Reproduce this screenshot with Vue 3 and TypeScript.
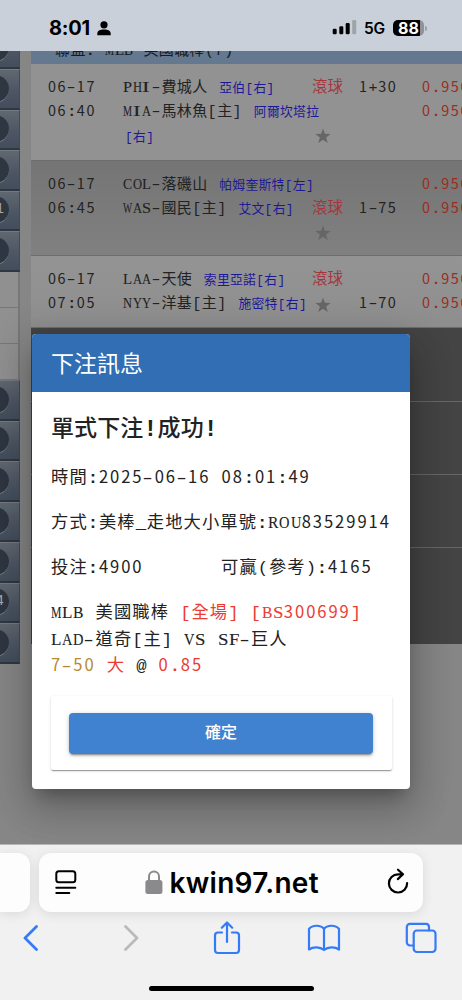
<script setup lang="ts">
import { h, type FunctionalComponent } from 'vue'

interface TeamLine { name?: string; pitcher: string }
interface Game {
  date: string
  time: string
  teams: TeamLine[]
  status: string[]
  handicap: string[]
}

const games: Game[] = [
  {
    date: '06-17', time: '06:40',
    teams: [
      { name: 'PHI-費城人 ', pitcher: '亞伯[右]' },
      { name: 'MIA-馬林魚[主] ', pitcher: '阿爾坎塔拉' },
      { pitcher: '[右]' },
    ],
    status: ['滾球', '', '★'], handicap: ['1+30'],
  },
  {
    date: '06-17', time: '06:45',
    teams: [
      { name: 'COL-落磯山 ', pitcher: '帕姆奎斯特[左]' },
      { name: 'WAS-國民[主] ', pitcher: '艾文[右]' },
    ],
    status: ['', '滾球', '★'], handicap: ['', '1-75'],
  },
  {
    date: '06-17', time: '07:05',
    teams: [
      { name: 'LAA-天使 ', pitcher: '索里亞諾[右]' },
      { name: 'NYY-洋基[主] ', pitcher: '施密特[右]' },
    ],
    status: ['滾球', '★'], handicap: ['', '1-70'],
  },
]

const menuTop = ['', '', '', '', '1', '']
const menuBottom = ['', '', '', '', '', '4', '']

// Advance widths of the serif capitals, in em, used to fit each one to a fixed cell.
const widths: Record<string, number> = {
  A: 0.722, B: 0.667, C: 0.667, D: 0.722, F: 0.556, H: 0.722, I: 0.4, L: 0.611, M: 0.889,
  N: 0.722, O: 0.722, P: 0.556, R: 0.667, S: 0.556, U: 0.722, V: 0.722, W: 0.944, Y: 0.722,
}

// Sets a line of mixed text on a typewriter grid: Latin in half cells, Han in full ones.
const Mono: FunctionalComponent<{ text: string }> = (props) => {
  const runs = props.text.match(/[0-9]+|[A-Z]|-|[:!.]|[^0-9.:!A-Z\u4e00-\u9fff-]+|[\u4e00-\u9fff]+/g) ?? []
  return h('span', { class: 'mono' }, runs.map((run) => {
    if (/[A-Z]/.test(run)) {
      const scale = 0.61 / (widths[run] ?? 0.7)
      return h('span', { class: 'm-cap' }, [
        h('span', { class: 'm-glyph', style: { transform: `scaleX(${scale.toFixed(3)})` } }, run),
      ])
    }
    if (run === '-') return h('span', { class: 'm-dash' }, run)
    if (/[:!.]/.test(run)) return h('span', { class: 'm-sym m-dot' }, run)
    const kind = /[0-9]/.test(run) ? 'm-num' : /[\u4e00-\u9fff]/.test(run) ? 'm-han' : 'm-sym'
    return h('span', { class: kind }, run)
  }))
}
Mono.props = ['text']
</script>

<template>
  <div class="phone">
    <header class="status">
      <span class="clock">8:01</span>
      <svg class="person" width="14" height="15" viewBox="0 0 14 15"><circle cx="7" cy="3.8" r="3.6" /><path d="M.3 14.2V12.6C.3 9.9 3 8.5 7 8.5s6.700 1.400 6.700 4.100v1.600z" /></svg>
      <svg class="signal" width="25" height="15" viewBox="0 0 25 15">
        <rect x=".7" y="8.700" width="4" height="5.600" rx="1.200" /><rect x="7.300" y="6.200" width="4" height="8.100" rx="1.200" />
        <rect x="13.700" y="3" width="4" height="11.300" rx="1.200" /><rect x="20.200" y="0" width="4" height="14.300" rx="1.200" fill="#9fa4ac" />
      </svg>
      <span class="net">5G</span>
      <span class="battery">88</span>
      <span class="cap"></span>
    </header>

    <main class="page">
      <aside class="side">
        <div class="menu first">
          <div v-for="(n, i) in menuTop" :key="i" class="item"><span class="dot">{{ n }}</span></div>
        </div>
        <div class="blank"><i></i><i></i><i></i></div>
        <div class="menu">
          <div v-for="(n, i) in menuBottom" :key="i" class="item"><span class="dot">{{ n }}</span></div>
        </div>
      </aside>

      <section class="board">
        <div class="league"><Mono text="聯盟: MLB 美國職棒(7)" /></div>
        <div v-for="(g, i) in games" :key="i" class="game" :class="'g' + i">
          <div class="col">
            <div class="ln"><Mono :text="g.date" /></div>
            <div class="ln"><Mono :text="g.time" /></div>
          </div>
          <div class="teams">
            <div v-for="(t, k) in g.teams" :key="k" class="team">
              <Mono v-if="t.name" :text="t.name" /><Mono class="pitcher" :text="t.pitcher" />
            </div>
          </div>
          <div class="col live">
            <template v-for="(s, k) in g.status" :key="k">
              <div v-if="s === '★'" class="star">
                <svg width="16" height="16" viewBox="0 0 16 16"><path d="M8 .5l1.900 5.300 5.700.2-4.500 3.500 1.600 5.500L8 11.800 3.300 15l1.600-5.500L.4 6l5.700-.2z" /></svg>
              </div>
              <div v-else class="ln">{{ s }}</div>
            </template>
          </div>
          <div class="col">
            <div v-for="(s, k) in g.handicap" :key="k" class="ln"><Mono :text="s" /></div>
          </div>
          <div class="col odds">
            <div class="ln"><Mono text="0.950" /></div>
            <div class="ln"><Mono text="0.950" /></div>
          </div>
        </div>
        <div class="dark"><i></i><i></i><i></i></div>
      </section>

      <div class="dialog">
        <div class="head">下注訊息</div>
        <div class="body">
          <h2><Mono text="單式下注!成功!" /></h2>
          <p><Mono text="時間:2025-06-16 08:01:49" /></p>
          <p><Mono text="方式:美棒_走地大小單號:ROU83529914" /></p>
          <p class="pair"><span><Mono text="投注:4900" /></span><span><Mono text="可贏(參考):4165" /></span></p>
          <div class="bet">
            <div><Mono text="MLB 美國職棒 " /><Mono class="red" text="[全場] [BS300699]" /></div>
            <div><Mono text="LAD-道奇[主] VS SF-巨人" /></div>
            <div><Mono class="gold" text="7-50 " /><Mono class="red" text="大 " /><Mono text="@ " /><Mono class="red" text="0.85" /></div>
          </div>
          <div class="actions"><button>確定</button></div>
        </div>
      </div>
    </main>

    <footer class="safari">
      <div class="tabs">
        <div class="prev"></div>
        <div class="address">
          <svg class="reader" width="22" height="25" viewBox="0 0 22 25" fill="none" stroke="#000" stroke-width="2" stroke-linecap="round"><rect x="1.300" y="1.200" width="19" height="11" rx="2.500" /><path d="M1.300 17.700h19M1.300 23h13" /></svg>
          <div class="host">
            <svg width="18" height="25" viewBox="0 0 18 25"><path d="M4 11V6.600a5 5 0 0 1 10 0V11" fill="none" stroke="#8a8a8d" stroke-width="2" /><rect x=".4" y="10" width="17" height="14" rx="2.500" fill="#8a8a8d" /></svg>
            <span>kwin97.net</span>
          </div>
          <svg class="reload" width="22" height="26" viewBox="0 0 22 26" fill="none" stroke="#000" stroke-width="2.200" stroke-linecap="round" stroke-linejoin="round"><path d="M16 6.300H11A9.100 9.100 0 1 0 20.100 15.200M11 1.700l5 4.600-5.200 4.800" /></svg>
        </div>
      </div>
      <nav class="tools">
        <svg width="16" height="26" viewBox="0 0 16 26"><path d="M13.500 1.500L2 13l11.500 11.500" /></svg>
        <svg class="off" width="16" height="26" viewBox="0 0 16 26"><path d="M2.500 1.500L14 13 2.500 24.500" /></svg>
        <svg class="thin share" width="28" height="34" viewBox="0 0 28 34"><path d="M9 11.500H5a3 3 0 0 0-3 3V29a3 3 0 0 0 3 3h18a3 3 0 0 0 3-3V14.500a3 3 0 0 0-3-3h-4M14 21V1.800M8.800 6.700L14 1.500l5.200 5.200" /></svg>
        <svg class="thin book" width="34" height="28" viewBox="0 0 34 28"><path d="M17 5C14 .8 5.500.5 2 5v20.500c4-3 11-3 15 .5 4-3.500 11-3.500 15-.5V5C28.500.5 20 .8 17 5zV26" /></svg>
        <svg class="thin" width="32" height="32" viewBox="0 0 32 32"><path d="M8.500 23.500H5a3.200 3.200 0 0 1-3.200-3.200V5A3.200 3.200 0 0 1 5 1.800h16A3.200 3.200 0 0 1 24 5v3.500" /><rect x="8.700" y="8.500" width="21.800" height="21.500" rx="3.200" /></svg>
      </nav>
      <div class="home"></div>
    </footer>
  </div>
</template>

<style>
body { margin: 0; }
.mono { white-space: pre; }
.mono .m-num { font-family: "Noto Sans CJK TC", sans-serif; font-size: .96em; letter-spacing: calc(var(--half) - .555em); }
.mono .m-han { letter-spacing: calc(var(--full) - 1em); }
.mono .m-sym { font-family: "Liberation Mono", monospace; letter-spacing: calc(var(--half) - .6em); }
.mono .m-dot { font-weight: 700; }
.mono .m-dash { display: inline-block; width: var(--half); line-height: 1; font-family: "Liberation Mono", monospace; transform: scaleX(1.55); text-indent: -.02em; }
.mono .m-cap { display: inline-block; width: var(--half); line-height: 1; }
.mono .m-glyph { display: inline-block; font-family: "Liberation Serif", serif; font-size: .99em; line-height: 1; transform-origin: 0 50%; -webkit-text-stroke: .1px currentColor; }
</style>

<style scoped>
.phone { width: 462px; height: 1000px; display: flex; flex-direction: column; overflow: hidden; background: #868686; font-family: "Noto Sans CJK TC", sans-serif; color: #222; }
.status { height: 51px; flex: none; display: flex; align-items: center; box-sizing: border-box; padding: 5px 36px 0 49px; background: #c9d0d9; font-family: Inter, sans-serif; color: #000; }
.clock { width: 42px; font-size: 20px; font-weight: 700; letter-spacing: -.2px; }
.person { margin-left: 6px; }
.signal { margin-left: auto; margin-top: -1px; }
.net { margin-left: 7px; width: 22px; font-size: 15.500px; font-weight: 600; letter-spacing: -.2px; }
.battery { margin-left: 7px; margin-top: -1px; width: 31px; height: 16px; line-height: 16px; border-radius: 5px; background: linear-gradient(90deg, #000 88%, #8e939b 88%); color: #fff; font-size: 16px; font-weight: 700; text-align: center; }
.cap { width: 2px; height: 5px; margin-left: 1px; border-radius: 0 2px 2px 0; background: #9a9fa7; margin-right: -1px; }
.page { position: relative; height: 793px; flex: none; display: flex; overflow: hidden; }
.side { width: 20px; flex: none; overflow: hidden; }
.first { height: 220.500px; display: flex; flex-direction: column; justify-content: flex-end; overflow: hidden; }
.item { height: 40.500px; flex: none; box-sizing: border-box; border-top: 1px solid #737a83; border-bottom: 2px solid #2f3742; border-right: 1px solid #414a57; background: linear-gradient(#606770, #4b5563 60%, #434d5b); display: flex; align-items: center; }
.dot { width: 28px; height: 28px; flex: none; margin-left: -19px; box-sizing: border-box; border-radius: 50%; background: #2e3641; border-bottom: 1px solid #77808a; color: #aaa; font: 14px/26px "Liberation Mono", monospace; text-align: right; padding-right: 5px; }
.blank { height: 108.500px; background: #909090; border-right: 2px solid #777; width: 18px; display: flex; flex-direction: column; }
.blank i { flex: 1; box-sizing: border-box; border-bottom: 1px solid #777; }
.board { width: 431px; margin-left: 11px; flex: none; --half: 9.600px; --full: 15.400px; font-size: 15px; }
.league { height: 13px; overflow: hidden; background: #64788f; box-sizing: border-box; padding-left: 24px; line-height: 20px; display: flex; align-items: flex-end; color: #171b20; }
.league > .mono { display: block; height: 22px; margin-bottom: 3px; }
.game { display: grid; grid-template-columns: 75px 189px 47px 63px 60px; box-sizing: border-box; padding: 10px 0 0 17px; border-bottom: 1px solid #6d6d6d; overflow: hidden; background: #929292; }
.g0 { height: 97px; }
.g1 { height: 95px; background: linear-gradient(#757575, #808080); }
.g2 { height: 72px; background: linear-gradient(#949494, #8e8e8e); }
.ln { height: 23.500px; line-height: 23.500px; white-space: nowrap; }
.team { height: 24.400px; line-height: 24px; white-space: nowrap; }
.pitcher { color: #1d1896; font-size: 12.800px; margin-left: 2px; --half: 8.100px; --full: 13.100px; }
.live { color: #a7353b; font-size: 15.500px; }
.star { height: 30px; display: flex; align-items: center; padding-left: 3px; fill: #666; }
.odds { color: #9d2c20; }
.dark { height: 316px; background: #444; }
.dark i { display: block; height: 73px; box-sizing: border-box; border-bottom: 1px solid #666; }
.dark i:first-child { height: 74px; }
.dialog { position: absolute; left: 32px; top: 283px; width: 378px; height: 455px; box-sizing: border-box; border-radius: 4px; overflow: hidden; background: #fff; box-shadow: 0 11px 15px -7px rgba(0,0,0,.25), 0 20px 38px 3px rgba(0,0,0,.16), 0 9px 40px 6px rgba(0,0,0,.14); }
.head { height: 58px; line-height: 57px; padding-left: 19px; background: #316eb3; color: #fff; font-size: 23px; }
.body { padding: 1px 18px 0 19px; font-size: 17.300px; --half: 11.150px; --full: 18.400px; }
h2 { margin: 13px 0 7px; height: 40px; line-height: 40px; font-size: 23px; font-weight: 500; --half: 14.200px; --full: 23.100px; }
p { margin: 0; height: 45px; line-height: 45px; white-space: nowrap; }
.pair { display: grid; grid-template-columns: 170px 1fr; }
.bet { margin-top: 10px; line-height: 26.700px; height: 80px; white-space: nowrap; }
.bet div { height: 26.700px; }
.red { color: #ea3c31; }
.gold { color: #b68b32; }
.actions { margin: 18px 0 0 0; width: 341px; height: 74px; box-sizing: border-box; padding: 17px 19px 16px 18px; border-radius: 2px; box-shadow: 0 2px 1px -1px rgba(0,0,0,.24), 0 1px 1px rgba(0,0,0,.14), 0 1px 3px rgba(0,0,0,.14); }
button { display: block; width: 304px; height: 41px; border: 0; border-radius: 4px; padding: 0 0 5px; background: #4082cf; color: #fff; font: 500 16px "Noto Sans CJK TC", sans-serif; box-shadow: 0 3px 1px -2px rgba(0,0,0,.2), 0 2px 2px rgba(0,0,0,.14), 0 1px 5px rgba(0,0,0,.2); }
.safari { height: 156px; flex: none; box-sizing: border-box; border-top: 1px solid #b5b5b5; background: #f1f1f1; }
.tabs { display: flex; gap: 9px; padding-top: 8px; }
.prev { width: 30px; height: 59px; border-radius: 0 12px 12px 0; background: #fdfdfd; box-shadow: 0 2px 12px rgba(0,0,0,.1); }
.address { width: 384px; height: 59px; box-sizing: border-box; display: flex; align-items: center; justify-content: space-between; padding: 0 14px 0 16px; border-radius: 12px; background: #fdfdfd; box-shadow: 0 2px 12px rgba(0,0,0,.1); }
.host { display: flex; align-items: center; gap: 7px; color: #000; font: 600 28px Inter, sans-serif; letter-spacing: .3px; }
.host span { width: 150px; white-space: nowrap; }
.reload { margin-top: -4px; }
.tools { height: 50px; display: flex; align-items: center; padding: 1px 0 0 23px; fill: none; stroke: #347bf7; stroke-width: 2.800; stroke-linecap: round; stroke-linejoin: round; }
.off { stroke: #bababa; margin-left: 84px; }
.share { margin-left: 74px; }
.book { margin-left: 66px; }
.book + svg { margin-left: 64px; }
.thin { stroke-width: 2.200; }
.home { width: 165px; height: 5px; margin: 23px auto 0; border-radius: 3px; background: #000; }
</style>
